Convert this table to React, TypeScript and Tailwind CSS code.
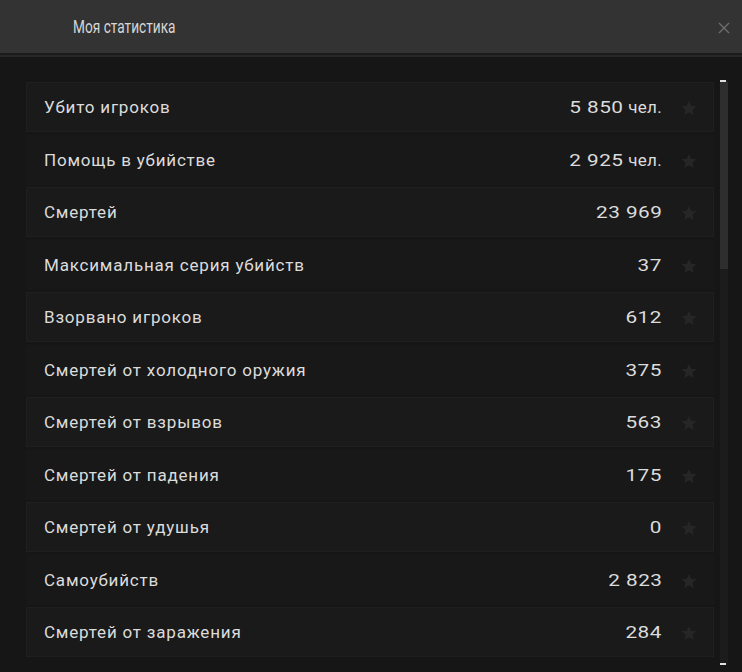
import React from "react";

const rows: [string, string, string?][] = [
  ["Убито игроков", "5 850", "чел."],
  ["Помощь в убийстве", "2 925", "чел."],
  ["Смертей", "23 969"],
  ["Максимальная серия убийств", "37"],
  ["Взорвано игроков", "612"],
  ["Смертей от холодного оружия", "375"],
  ["Смертей от взрывов", "563"],
  ["Смертей от падения", "175"],
  ["Смертей от удушья", "0"],
  ["Самоубийств", "2 823"],
  ["Смертей от заражения", "284"],
];

function Star() {
  return (
    <svg width="18" height="18" viewBox="0 0 24 24" className="shrink-0">
      <path
        d="M12 2.5l2.9 6.6 7.1.6-5.4 4.7 1.6 7-6.2-3.7-6.2 3.7 1.6-7L2 9.7l7.1-.6z"
        fill="#262626"
      />
    </svg>
  );
}

export default function App() {
  return (
    <div
      className="w-[742px] h-[672px] bg-[#161616] flex flex-col overflow-hidden"
      style={{ fontFamily: "Roboto, 'Noto Sans', sans-serif" }}
    >
      <div className="h-[53px] shrink-0 bg-[#333333] flex items-center justify-between pl-[73px] pr-[12px]">
        <span className="inline-block text-[19px] text-[#d6d6d6] pt-[2px] scale-x-[0.72] origin-left whitespace-nowrap">
          Моя статистика
        </span>
        <svg width="12" height="12" viewBox="0 0 12 12" className="mt-[2px]">
          <path d="M1 1L11 11M11 1L1 11" stroke="#6e6e6e" strokeWidth="1.4" />
        </svg>
      </div>
      <div className="h-[2px] shrink-0 bg-[#1c1c1c]" />
      <div className="h-[2px] shrink-0 bg-[#262626]" />
      <div className="flex-1 flex pl-[26px] pt-[25px] relative">
        <div className="w-[688px] flex flex-col gap-[2.5px]">
          {rows.map(([label, num, unit], i) => (
            <div
              key={i}
              className={
                "h-[50px] shrink-0 flex items-center pl-[17px] pr-[15px] border pt-[2px] " +
                (i % 2 === 0
                  ? "bg-[#1a1a1a] border-[#1f1f1f]"
                  : "bg-[#181818] border-[#181818]")
              }
            >
              <span className="flex-1 text-[17px] text-[#dcdcdc] tracking-[0.8px]">{label}</span>
              <span className="text-[17px] text-[#dcdcdc] mr-[18px] flex items-baseline">
                <span className="inline-block scale-x-[1.22] origin-right tracking-[0.4px]">{num}</span>
                {unit && <span className="ml-[5px] tracking-[0.3px]">{unit}</span>}
              </span>
              <Star />
            </div>
          ))}
        </div>
        <div className="ml-[6px] mt-[-2px] w-[8px] h-[585px] bg-[#1c1c1c] flex flex-col">
          <div className="h-[2px] bg-[#e0e0e0] w-[6px]" />
          <div className="h-[187px] bg-[#2e2e2e]" />
          <div className="flex-1" />
          <div className="h-[2px] bg-[#e0e0e0] w-[6px]" />
        </div>
      </div>
    </div>
  );
}
